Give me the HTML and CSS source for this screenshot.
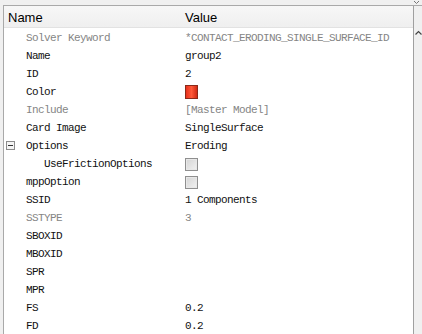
FILE: index.html
```html
<!DOCTYPE html>
<html lang="en">
<head>
    <meta charset="UTF-8">
    <title>Properties</title>
    <link rel="stylesheet" href="styles.css">
</head>
<body>
    <div class="topbar">
        <svg class="pin" width="7" height="5" viewBox="0 0 7 5"><path d="M1 1 L3.5 3.5 L6 1" fill="none" stroke="#777" stroke-width="1"/></svg>
    </div>
    <div class="panel">
        <div class="grid">
            <div class="head">
                <span class="col-name">Name</span>
                <span class="col-value">Value</span>
            </div>
            <div class="row dim"><span class="key">Solver Keyword</span><span class="val">*CONTACT_ERODING_SINGLE_SURFACE_ID</span></div>
            <div class="row"><span class="key">Name</span><span class="val">group2</span></div>
            <div class="row"><span class="key">ID</span><span class="val">2</span></div>
            <div class="row"><span class="key">Color</span><span class="val"><i class="swatch"></i></span></div>
            <div class="row dim"><span class="key">Include</span><span class="val">[Master Model]</span></div>
            <div class="row"><span class="key">Card Image</span><span class="val">SingleSurface</span></div>
            <div class="row"><span class="key"><i class="toggle"></i>Options</span><span class="val">Eroding</span></div>
            <div class="row"><span class="key sub">UseFrictionOptions</span><span class="val"><i class="check"></i></span></div>
            <div class="row"><span class="key">mppOption</span><span class="val"><i class="check"></i></span></div>
            <div class="row"><span class="key">SSID</span><span class="val">1 Components</span></div>
            <div class="row dim"><span class="key">SSTYPE</span><span class="val">3</span></div>
            <div class="row"><span class="key">SBOXID</span><span class="val"></span></div>
            <div class="row"><span class="key">MBOXID</span><span class="val"></span></div>
            <div class="row"><span class="key">SPR</span><span class="val"></span></div>
            <div class="row"><span class="key">MPR</span><span class="val"></span></div>
            <div class="row"><span class="key">FS</span><span class="val">0.2</span></div>
            <div class="row"><span class="key">FD</span><span class="val">0.2</span></div>
        </div>
        <div class="scroll">
            <svg width="9" height="6" viewBox="0 0 9 6"><path d="M1.5 4.5 L4.5 1.5 L7.5 4.5" fill="none" stroke="#444" stroke-width="1.2"/></svg>
        </div>
    </div>
</body>
</html>
```

FILE: styles.css
```css
* {
    padding: 0;
    margin: 0;
    box-sizing: border-box;
}

body {
    background: #f0f0f0;
    width: 422px;
    height: 334px;
    overflow: hidden;
}

.topbar {
    height: 5px;
    position: relative;
}

.pin {
    position: absolute;
    right: 2px;
    top: 0;
}

.panel {
    display: flex;
    margin-left: 3px;
    height: 329px;
    border-top: 1px solid #a9a9a9;
    border-left: 1px solid #a9a9a9;
}

.grid {
    flex: 1;
    background: #fff;
}

.head {
    display: flex;
    height: 22px;
    padding-top: 2px;
    align-items: center;
    background: linear-gradient(#f7f7f7, #efefef);
    border-bottom: 1px solid #e2e2e2;
    font-family: "Liberation Sans", Arial, sans-serif;
    font-size: 13px;
    color: #000;
}

.head .col-name {
    width: 181px;
    padding-left: 4px;
}

.row {
    display: flex;
    height: 18px;
    padding-top: 2px;
    align-items: center;
    font-family: "Liberation Mono", monospace;
    font-size: 11px;
    letter-spacing: -0.6px;
    color: #111;
}

.row.dim {
    color: #858585;
}

.key {
    width: 181px;
    padding-left: 22px;
    position: relative;
}

.key.sub {
    padding-left: 40px;
}

.val {
    display: flex;
    align-items: center;
}

.toggle {
    position: absolute;
    left: 2px;
    top: 1px;
    width: 9px;
    height: 9px;
    border: 1px solid #8c8c8c;
    background: #f4f4f4;
}

.toggle::after {
    content: "";
    position: absolute;
    left: 1px;
    top: 3px;
    width: 5px;
    height: 1px;
    background: #333;
}

.swatch {
    display: block;
    width: 13px;
    height: 14px;
    border: 1px solid #8a2a1a;
    background: linear-gradient(90deg, #e8301c, #ff5a3a 50%, #d22a14);
}

.check {
    display: block;
    width: 13px;
    height: 13px;
    border: 1px solid #8f8f8f;
    background: linear-gradient(135deg, #d4d4d4, #f2f2f2);
    box-shadow: inset 0 0 0 1px #e8e8e8;
}

.scroll {
    width: 9px;
    border-left: 1px solid #a0a0a0;
    background: #f0f0f0;
    padding-top: 24px;
}

.scroll svg {
    display: block;
}
```
